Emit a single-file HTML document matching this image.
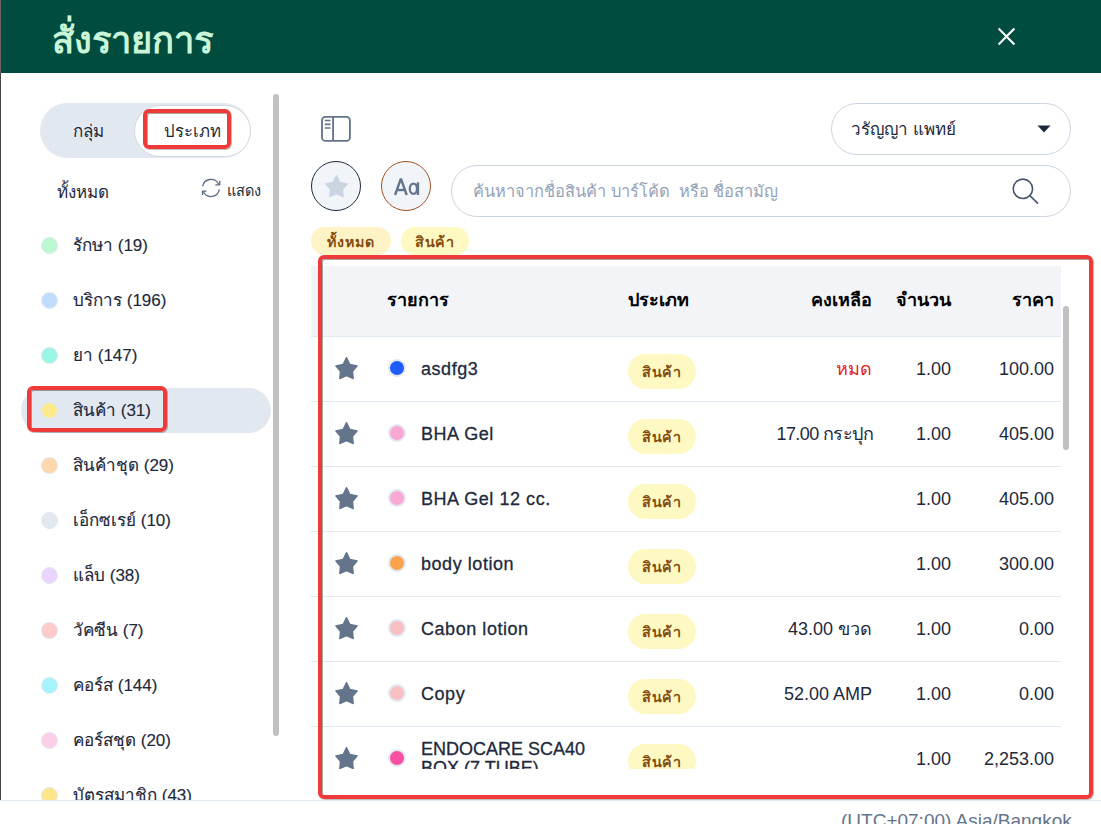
<!DOCTYPE html>
<html><head><meta charset="utf-8">
<style>
*{box-sizing:border-box;margin:0;padding:0}
html,body{width:1101px;height:824px;overflow:hidden;background:#fff;font-family:"Liberation Sans",sans-serif;color:#1e293b}
.a{position:absolute;white-space:nowrap}
#strip{left:0;top:0;width:1px;height:800px;background:linear-gradient(#6b6462 0,#6b6462 73px,#444 73px)}
#hdr{left:1px;top:0;width:1100px;height:73px;background:#004d40}
#title{left:52px;top:16px;font-size:36.3px;font-weight:bold;color:#c9f5d8;line-height:50px}
#close{left:996px;top:26px;width:20px;height:20px}
/* left */
#seg{left:40px;top:103px;width:211px;height:55px;border-radius:28px;background:#e2e8f0}
#segon{left:134px;top:105px;width:117px;height:52px;border-radius:26px;background:#fff;border:1.3px solid #d3dae4}
.t16{font-size:17px;line-height:22px}
#scroll1{left:273px;top:94px;width:6px;height:642px;border-radius:3px;background:#c1c1c1}
.dot{position:absolute;width:17px;height:17px;border-radius:50%}
.li{position:absolute;left:73px;font-size:17px;line-height:22px;-webkit-text-stroke:0.15px #1e293b}
#sel{left:21px;top:388px;width:250px;height:45px;border-radius:23px;background:#e2e8f0}
.red{position:absolute;border:4px solid #ef3a3a;border-radius:6px;box-shadow:inset 1px 1px 0 rgba(0,0,0,.35),1px 1px 0 rgba(0,0,0,.25)}
/* right */
.pill{position:absolute;border:1.5px solid #cbd5e1;border-radius:30px;background:#fff}
.circ{position:absolute;width:50px;height:50px;border-radius:50%;background:#f1f5f9}
.tag{position:absolute;height:28px;border-radius:14px;font-size:14.3px;letter-spacing:0.9px;font-weight:bold;color:#854d0e;line-height:30px;text-align:center}
#thead{left:311px;top:266px;width:750px;height:71px;background:#f2f4f7;border-bottom:1px solid #e2e8f0}
.th{position:absolute;font-size:18px;font-weight:bold;color:#000;line-height:22px}
.row{position:absolute;left:311px;width:750px;height:65px;border-bottom:1px solid #e2e8f0}
.nm{position:absolute;white-space:nowrap;left:110px;font-size:18px;letter-spacing:0.55px;-webkit-text-stroke:0.3px #1e293b;line-height:22px;color:#1e293b}
.star{position:absolute;left:19px;top:15px;width:32px;height:32px}
.rdot{position:absolute;left:77px;width:18px;height:18px;border-radius:50%;border:2px solid #e2e8f0}
.badge{position:absolute;left:317px;width:68px;height:35px;border-radius:18px;background:#fef9c3;color:#854d0e;font-size:14.3px;letter-spacing:0.8px;font-weight:bold;line-height:36px;text-align:center}
.num{position:absolute;white-space:nowrap;font-size:18px;line-height:22px;color:#1e293b;text-align:right}
#scroll2{left:1063px;top:306px;width:6px;height:144px;border-radius:3px;background:#c1c1c1}
#foot{left:0;top:800px;width:1101px;height:1px;background:#e2e8f0}
</style></head><body>
<div class="a" id="strip"></div>
<div class="a" id="hdr"></div>
<div class="a" id="title">สั่งรายการ</div>
<svg class="a" id="close" viewBox="0 0 20 20"><path d="M2.6 2.6L18.4 18.4M18.4 2.6L2.6 18.4" stroke="#fff" stroke-width="2.1"/></svg>

<!-- left panel -->
<div class="a" id="seg"></div>
<div class="a" id="segon"></div>
<div class="a t16" style="left:73px;top:121px">กลุ่ม</div>
<div class="a t16" style="left:164px;top:121px;font-size:16.7px">ประเภท</div>
<div class="red" style="left:143px;top:109px;width:88px;height:40px"></div>

<div class="a t16" style="left:57px;top:181.5px">ทั้งหมด</div>
<svg class="a" style="left:196px;top:172px" width="30" height="30" viewBox="0 0 30 30"><g fill="none" stroke="#5b6b82" stroke-width="1.3"><path d="M6.6 14.4A8.5 8.5 0 0 1 22.6 12.2"/><path d="M23.7 8.8V12.9H19.4"/><path d="M23.3 17.3A8.5 8.5 0 0 1 7.3 19.8"/><path d="M6.5 23V19.2H10.5"/></g></svg>
<div class="a" style="left:227px;top:181px;font-size:14.5px;line-height:20px">แสดง</div>

<div class="a" id="sel"></div>
<div class="dot" style="left:41px;top:237px;background:#bbf7d0;border:1px solid #e2e8f0"></div><div class="li" style="top:235px">รักษา (19)</div>
<div class="dot" style="left:41px;top:292px;background:#bfdbfe;border:1px solid #e2e8f0"></div><div class="li" style="top:290px">บริการ (196)</div>
<div class="dot" style="left:41px;top:347px;background:#99f6e4;border:1px solid #e2e8f0"></div><div class="li" style="top:345px">ยา (147)</div>
<div class="dot" style="left:42px;top:403px;width:15px;height:15px;background:#feea8a"></div><div class="li" style="top:400px">สินค้า (31)</div>
<div class="dot" style="left:41px;top:457px;background:#fed7aa;border:1px solid #e2e8f0"></div><div class="li" style="top:455px">สินค้าชุด (29)</div>
<div class="dot" style="left:41px;top:512px;background:#e2e8f0;border:1px solid #e2e8f0"></div><div class="li" style="top:510px">เอ็กซเรย์ (10)</div>
<div class="dot" style="left:41px;top:567px;background:#e9d5ff;border:1px solid #e2e8f0"></div><div class="li" style="top:565px">แล็บ (38)</div>
<div class="dot" style="left:41px;top:622px;background:#fecaca;border:1px solid #e2e8f0"></div><div class="li" style="top:620px">วัคซีน (7)</div>
<div class="dot" style="left:41px;top:677px;background:#a5f3fc;border:1px solid #e2e8f0"></div><div class="li" style="top:675px">คอร์ส (144)</div>
<div class="dot" style="left:41px;top:732px;background:#fbcfe8;border:1px solid #e2e8f0"></div><div class="li" style="top:730px">คอร์สชุด (20)</div>
<div style="position:absolute;left:0;top:760px;width:272px;height:40px;overflow:hidden">
<div class="dot" style="left:41px;top:27px;background:#fde68a;border:1px solid #e2e8f0"></div><div class="li" style="top:25px">บัตรสมาชิก (43)</div>
</div>
<div class="red" style="left:27px;top:386px;width:140px;height:46px"></div>
<div class="a" id="scroll1"></div>

<!-- right panel -->
<svg class="a" style="left:320px;top:115px" width="32" height="28" viewBox="0 0 32 28"><g fill="none" stroke="#64748b" stroke-width="1.85"><rect x="2" y="1.8" width="27.9" height="24.1" rx="3.5"/><path d="M13.1 1.8V25.9"/><path d="M4.8 5.5H10.5M4.8 9.4H10.5M4.8 13H10.5" stroke-width="1.6"/></g></svg>

<div class="pill" style="left:831px;top:103px;width:240px;height:52px"></div>
<div class="a t16" style="left:851px;top:119px">วรัญญา แพทย์</div>
<svg class="a" style="left:1037px;top:125px" width="14" height="8" viewBox="0 0 14 8"><path d="M0.5 0.5H13.5L7 7.5Z" fill="#1e293b"/></svg>

<div class="circ" style="left:311px;top:161px;border:1.3px solid #1e293b"></div>
<svg class="a" style="left:320px;top:170px" width="32" height="32" viewBox="0 0 32 32"><path d="M16.5 5.6L19.8 12.3L27.2 13.9L22.6 19.3L23.2 26.6L16.5 23.7L9.8 26.6L10.4 19.3L5.8 13.9L13.2 12.3Z" fill="#cbd5e1" stroke="#cbd5e1" stroke-width="1.3" stroke-linejoin="round"/></svg>
<div class="circ" style="left:381px;top:161px;border:1.3px solid #a4501e"></div>
<svg class="a" style="left:380px;top:160px" width="52" height="52" viewBox="0 0 52 52"><g fill="none" stroke="#64748b" stroke-width="2.4"><path d="M15.1 35L20.9 18.6L26.7 35" stroke-linejoin="bevel"/><path d="M17 30H24.8"/><ellipse cx="33.4" cy="28.8" rx="3.6" ry="5.1" stroke-width="2.3"/><path d="M37.9 22.4V35" stroke-width="2.5"/></g></svg>

<div class="pill" style="left:451px;top:165px;width:620px;height:52px"></div>
<div class="a" style="left:473px;top:180px;font-size:16.4px;line-height:22px;color:#94a3b8">ค้นหาจากชื่อสินค้า บาร์โค้ด &nbsp;หรือ ชื่อสามัญ</div>
<svg class="a" style="left:1010px;top:176px" width="30" height="30" viewBox="0 0 30 30"><g fill="none" stroke="#475569" stroke-width="1.6" stroke-linecap="round"><circle cx="12.9" cy="12.8" r="9.7"/><path d="M19.8 19.7L27.6 27.2"/></g></svg>

<div class="tag" style="left:311px;top:227px;width:80px;background:#fef3c7">ทั้งหมด</div>
<div class="tag" style="left:401px;top:227px;width:68px;background:#fef9c3">สินค้า</div>

<!-- table -->
<div style="position:absolute;left:0;top:0;width:1101px;height:769px;overflow:hidden">
<div class="a" id="thead"></div>
<div class="th" style="left:387px;top:289px">รายการ</div>
<div class="th" style="left:628px;top:289px">ประเภท</div>
<div class="th" style="left:772px;top:289px;width:100px;text-align:right">คงเหลือ</div>
<div class="th" style="left:851px;top:289px;width:100px;text-align:right">จำนวน</div>
<div class="th" style="left:954px;top:289px;width:100px;text-align:right">ราคา</div>
</div>
<div id="rows" style="position:absolute;left:0;top:0;width:1101px;height:769px;overflow:hidden">
<div class="row" style="top:337px">
<svg class="star" viewBox="0 0 32 32"><path d="M16.5 5.6L19.8 12.3L27.2 13.9L22.6 19.3L23.2 26.6L16.5 23.7L9.8 26.6L10.4 19.3L5.8 13.9L13.2 12.3Z" fill="#64748b" stroke="#64748b" stroke-width="1.3" stroke-linejoin="round"/></svg>
<div class="rdot" style="top:22px;background:#1f5bff"></div>
<div class="nm" style="top:21px">asdfg3</div>
<div class="badge" style="top:17px">สินค้า</div>
<div class="num" style="left:461px;top:21px;width:100px;color:#dc2626;">หมด</div>
<div class="num" style="left:540px;top:21px;width:100px">1.00</div>
<div class="num" style="left:643px;top:21px;width:100px">100.00</div>
</div>
<div class="row" style="top:402px">
<svg class="star" viewBox="0 0 32 32"><path d="M16.5 5.6L19.8 12.3L27.2 13.9L22.6 19.3L23.2 26.6L16.5 23.7L9.8 26.6L10.4 19.3L5.8 13.9L13.2 12.3Z" fill="#64748b" stroke="#64748b" stroke-width="1.3" stroke-linejoin="round"/></svg>
<div class="rdot" style="top:22px;background:#f9a8d4"></div>
<div class="nm" style="top:21px">BHA Gel</div>
<div class="badge" style="top:17px">สินค้า</div>
<div class="num" style="left:462px;top:21px;width:100px;letter-spacing:-0.6px">17.00 กระปุก</div>
<div class="num" style="left:540px;top:21px;width:100px">1.00</div>
<div class="num" style="left:643px;top:21px;width:100px">405.00</div>
</div>
<div class="row" style="top:467px">
<svg class="star" viewBox="0 0 32 32"><path d="M16.5 5.6L19.8 12.3L27.2 13.9L22.6 19.3L23.2 26.6L16.5 23.7L9.8 26.6L10.4 19.3L5.8 13.9L13.2 12.3Z" fill="#64748b" stroke="#64748b" stroke-width="1.3" stroke-linejoin="round"/></svg>
<div class="rdot" style="top:22px;background:#f9a8d4"></div>
<div class="nm" style="top:21px">BHA Gel 12 cc.</div>
<div class="badge" style="top:17px">สินค้า</div>
<div class="num" style="left:540px;top:21px;width:100px">1.00</div>
<div class="num" style="left:643px;top:21px;width:100px">405.00</div>
</div>
<div class="row" style="top:532px">
<svg class="star" viewBox="0 0 32 32"><path d="M16.5 5.6L19.8 12.3L27.2 13.9L22.6 19.3L23.2 26.6L16.5 23.7L9.8 26.6L10.4 19.3L5.8 13.9L13.2 12.3Z" fill="#64748b" stroke="#64748b" stroke-width="1.3" stroke-linejoin="round"/></svg>
<div class="rdot" style="top:22px;background:#fba34c"></div>
<div class="nm" style="top:21px">body lotion</div>
<div class="badge" style="top:17px">สินค้า</div>
<div class="num" style="left:540px;top:21px;width:100px">1.00</div>
<div class="num" style="left:643px;top:21px;width:100px">300.00</div>
</div>
<div class="row" style="top:597px">
<svg class="star" viewBox="0 0 32 32"><path d="M16.5 5.6L19.8 12.3L27.2 13.9L22.6 19.3L23.2 26.6L16.5 23.7L9.8 26.6L10.4 19.3L5.8 13.9L13.2 12.3Z" fill="#64748b" stroke="#64748b" stroke-width="1.3" stroke-linejoin="round"/></svg>
<div class="rdot" style="top:22px;background:#f8c0c3"></div>
<div class="nm" style="top:21px">Cabon lotion</div>
<div class="badge" style="top:17px">สินค้า</div>
<div class="num" style="left:461px;top:21px;width:100px;">43.00 ขวด</div>
<div class="num" style="left:540px;top:21px;width:100px">1.00</div>
<div class="num" style="left:643px;top:21px;width:100px">0.00</div>
</div>
<div class="row" style="top:662px">
<svg class="star" viewBox="0 0 32 32"><path d="M16.5 5.6L19.8 12.3L27.2 13.9L22.6 19.3L23.2 26.6L16.5 23.7L9.8 26.6L10.4 19.3L5.8 13.9L13.2 12.3Z" fill="#64748b" stroke="#64748b" stroke-width="1.3" stroke-linejoin="round"/></svg>
<div class="rdot" style="top:22px;background:#f8c0c3"></div>
<div class="nm" style="top:21px">Copy</div>
<div class="badge" style="top:17px">สินค้า</div>
<div class="num" style="left:461px;top:21px;width:100px;">52.00 AMP</div>
<div class="num" style="left:540px;top:21px;width:100px">1.00</div>
<div class="num" style="left:643px;top:21px;width:100px">0.00</div>
</div>
<div class="row" style="top:727px">
<svg class="star" viewBox="0 0 32 32"><path d="M16.5 5.6L19.8 12.3L27.2 13.9L22.6 19.3L23.2 26.6L16.5 23.7L9.8 26.6L10.4 19.3L5.8 13.9L13.2 12.3Z" fill="#64748b" stroke="#64748b" stroke-width="1.3" stroke-linejoin="round"/></svg>
<div class="rdot" style="top:22px;background:#fb4fa4"></div>
<div class="nm" style="top:12.5px;line-height:19.6px;letter-spacing:0">ENDOCARE SCA40<br>BOX (7 TUBE)</div>
<div class="badge" style="top:17px">สินค้า</div>
<div class="num" style="left:540px;top:21px;width:100px">1.00</div>
<div class="num" style="left:643px;top:21px;width:100px">2,253.00</div>
</div>
</div>
<div class="a" id="scroll2"></div>

<div class="red" style="left:318px;top:255px;width:775px;height:544px"></div>
<div class="a" id="foot"></div>
<div class="a" style="left:841px;top:810px;font-size:19px;line-height:22px;color:#64748b;letter-spacing:0">(UTC+07:00) Asia/Bangkok</div>
</body></html>
